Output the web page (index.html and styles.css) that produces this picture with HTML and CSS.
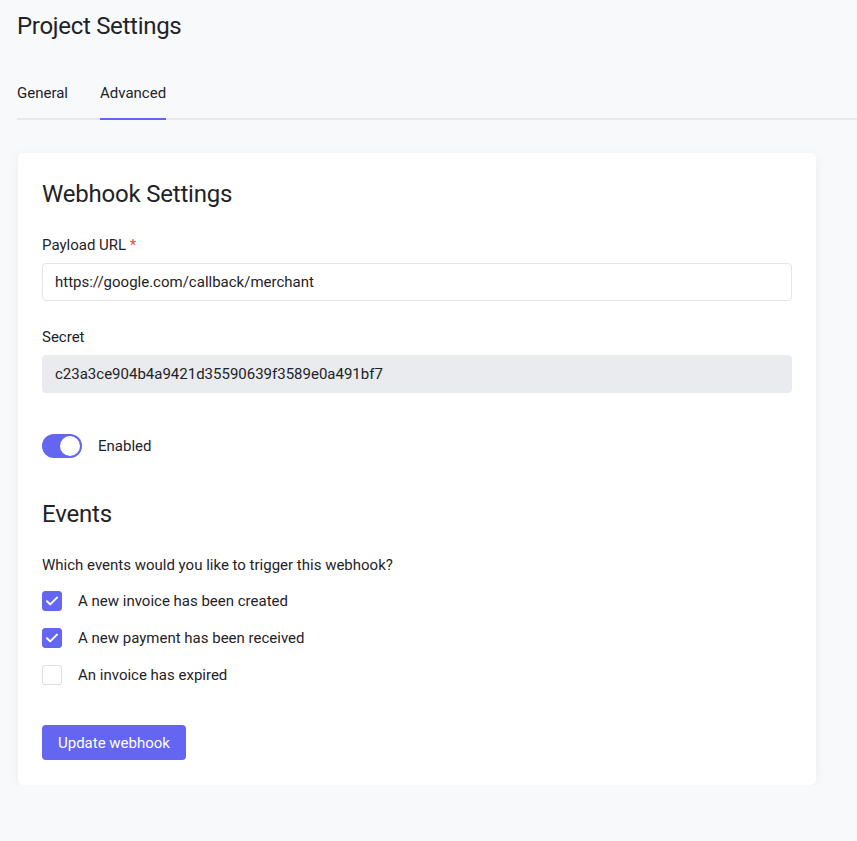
FILE: index.html
```html
<!DOCTYPE html>
<html lang="en">
<head>
<meta charset="utf-8">
<title>Project Settings</title>
<link rel="stylesheet" href="styles.css">
</head>
<body>
<div class="page">
  <h1 class="page-title">Project Settings</h1>
  <nav class="tabs">
    <a class="tab">General</a>
    <a class="tab active">Advanced</a>
  </nav>
  <section class="card">
    <h2 class="card-title">Webhook Settings</h2>
    <div class="field">
      <label class="label">Payload URL <span class="req">*</span></label>
      <div class="input">https://google.com/callback/merchant</div>
    </div>
    <div class="field">
      <label class="label">Secret</label>
      <div class="input readonly">c23a3ce904b4a9421d35590639f3589e0a491bf7</div>
    </div>
    <div class="toggle-row">
      <span class="toggle"><span class="knob"></span></span>
      <span class="toggle-label">Enabled</span>
    </div>
    <h2 class="card-title events">Events</h2>
    <p class="question">Which events would you like to trigger this webhook?</p>
    <div class="checks">
      <div class="check-row">
        <span class="box checked"><svg viewBox="0 0 20 20" width="20" height="20"><path d="M5 10.2l3.2 3.2L15 6.6" fill="none" stroke="#fff" stroke-width="2" stroke-linecap="round" stroke-linejoin="round"/></svg></span>
        <span>A new invoice has been created</span>
      </div>
      <div class="check-row">
        <span class="box checked"><svg viewBox="0 0 20 20" width="20" height="20"><path d="M5 10.2l3.2 3.2L15 6.6" fill="none" stroke="#fff" stroke-width="2" stroke-linecap="round" stroke-linejoin="round"/></svg></span>
        <span>A new payment has been received</span>
      </div>
      <div class="check-row">
        <span class="box"></span>
        <span>An invoice has expired</span>
      </div>
    </div>
    <button class="btn">Update webhook</button>
  </section>
</div>
</body>
</html>
```
FILE: styles.css
```css
* { box-sizing: border-box; }
html, body { margin: 0; padding: 0; }
body {
  background: #f8f9fb;
  font-family: Roboto, "Noto Sans", sans-serif;
  color: #1f2328;
}
.page { padding: 12px 0 0 17px; }
.page-title {
  margin: 0;
  font-size: 24px;
  font-weight: 400;
  line-height: 28px;
  letter-spacing: -0.3px;
}
.tabs {
  display: flex;
  gap: 32px;
  margin-top: 40px;
  border-bottom: 2px solid #e6e8eb;
}
.tab {
  font-size: 15px;
  line-height: 20px;
  padding: 3px 0 15px;
  margin-bottom: -2px;
  border-bottom: 2px solid transparent;
}
.tab.active { border-bottom-color: #6466f1; }
.card {
  margin: 33px 0 0 1px;
  width: 798px;
  background: #fff;
  border-radius: 5px;
  box-shadow: 0 2px 12px rgba(20, 30, 60, 0.05);
  padding: 27px 24px 25px;
}
.card-title {
  margin: 0;
  font-size: 24px;
  font-weight: 400;
  line-height: 28px;
  letter-spacing: -0.2px;
}
.field { margin-top: 27px; }
.field + .field { margin-top: 26px; }
.label {
  display: block;
  font-size: 15px;
  line-height: 20px;
  margin-bottom: 8px;
}
.req { color: #ef4444; }
.input {
  height: 38px;
  border: 1px solid #e3e5e8;
  border-radius: 4px;
  padding: 0 12px;
  display: flex;
  align-items: center;
  font-size: 15px;
}
.input.readonly { background: #e9ebee; border-color: #e9ebee; }
.toggle-row {
  margin-top: 41px;
  display: flex;
  align-items: center;
  gap: 16px;
}
.toggle {
  width: 40px;
  height: 24px;
  border-radius: 12px;
  background: #6466f1;
  display: flex;
  align-items: center;
  justify-content: flex-end;
  padding: 2px;
}
.knob {
  width: 20px;
  height: 20px;
  border-radius: 50%;
  background: #fff;
}
.toggle-label { font-size: 15px; }
.card-title.events { margin-top: 42px; }
.question {
  margin: 27px 0 0;
  font-size: 15px;
  line-height: 20px;
}
.checks {
  margin-top: 16px;
  display: flex;
  flex-direction: column;
  gap: 17px;
}
.check-row {
  display: flex;
  align-items: center;
  gap: 16px;
  font-size: 15px;
  line-height: 20px;
}
.box {
  width: 20px;
  height: 20px;
  border: 1px solid #dcdfe3;
  border-radius: 3px;
  background: #fff;
  display: flex;
}
.box.checked { background: #6466f1; border-color: #6466f1; }
.box svg { margin: -1px; }
.btn {
  margin-top: 40px;
  height: 35px;
  padding: 0 16px;
  border: 0;
  border-radius: 4px;
  background: #6466f1;
  color: #fff;
  font-family: inherit;
  font-size: 15px;
}
```
